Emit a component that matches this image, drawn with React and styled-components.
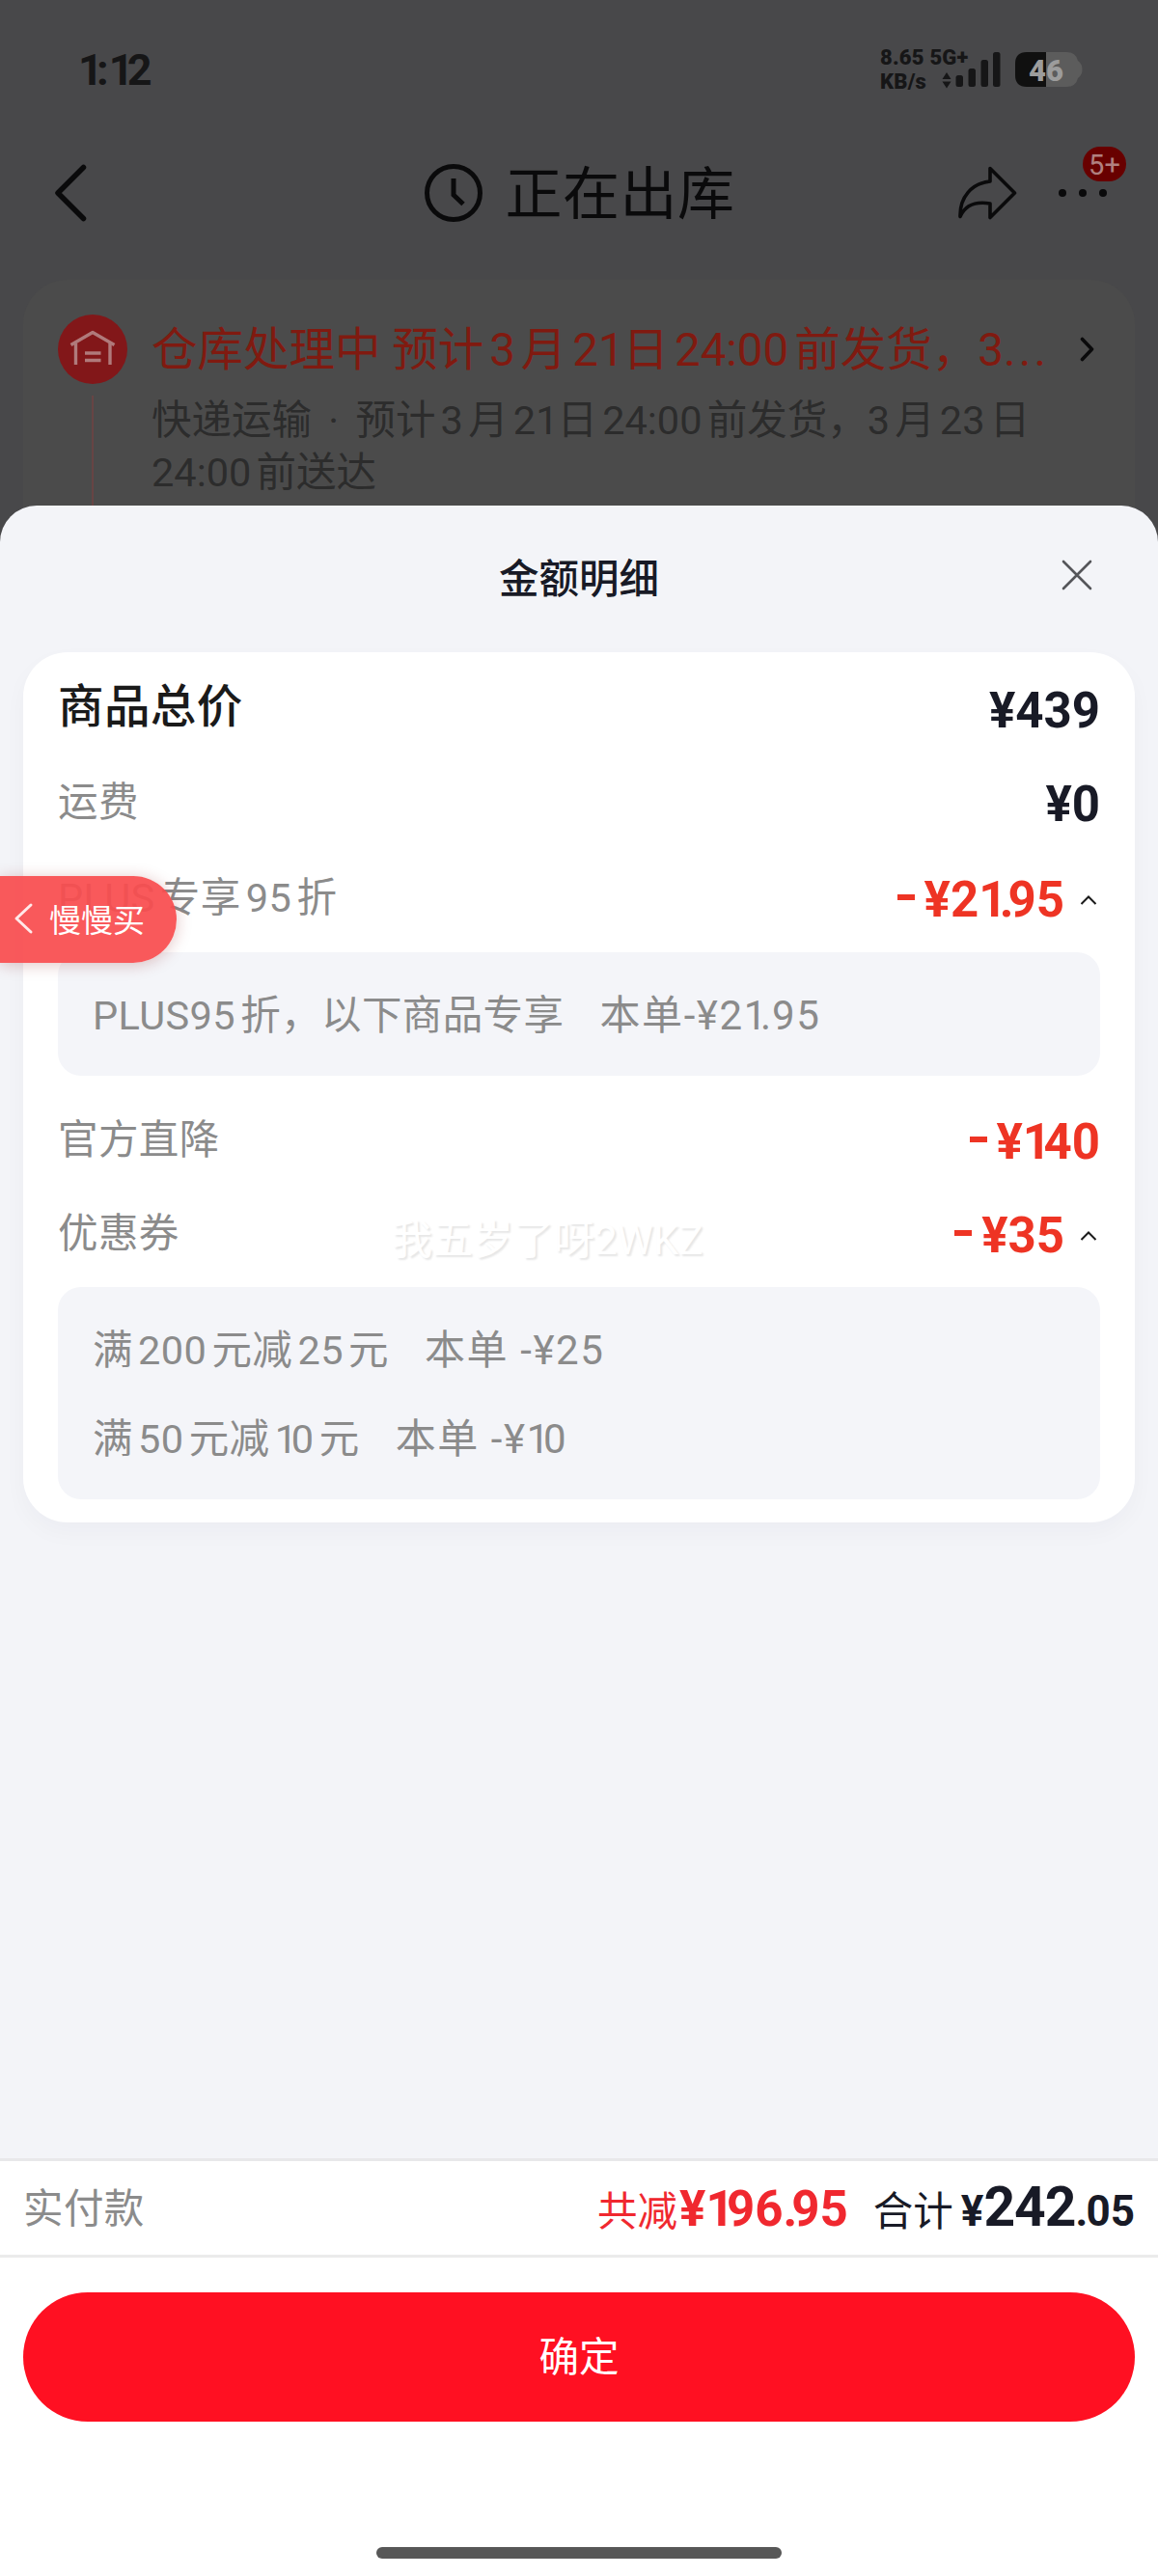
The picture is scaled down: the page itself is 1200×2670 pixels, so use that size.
import React from 'react'
import styled, { createGlobalStyle } from 'styled-components'

const GlobalStyle = createGlobalStyle`
    * { box-sizing: border-box; }
    body {
        margin: 0;
        background: #ffffff;
        font-family: Roboto, 'Noto Sans CJK SC', sans-serif;
        text-autospace: normal;
    }
`

const goods = [
    {
        label: 'PLUS专享95折', price: '¥21.95', height: 99,
        notes: [['PLUS95折，以下商品专享', '本单-¥21.95']],
    },
    { label: '官方直降', price: '¥140', height: 97 },
    {
        label: '优惠券', price: '¥35', height: 97,
        notes: [['满200元减25元', '本单 -¥25'], ['满50元减10元', '本单 -¥10']],
    },
]

const Amount = ({ children }) =>
    children.split(/(1|\.)/).map((part, i) => {
        if (part === '1') return <One key={i}>1</One>
        if (part === '.') return <Point key={i}>.</Point>
        return part
    })

const StatusIcons = () => (
    <svg width="146" height="44" viewBox="976 50 146 44" fill="#161617">
        <path d="M976.5 82 L981 75 L985.5 82 Z M976.5 84.500 L981 91.500 L985.5 84.500 Z" />
        <rect x="990.500" y="78" width="7.500" height="12" rx="2.500" />
        <rect x="1003.500" y="71" width="7.500" height="19" rx="2.500" />
        <rect x="1016.500" y="62" width="7.500" height="28" rx="2.500" />
        <rect x="1029" y="54" width="7.500" height="36" rx="2.500" />
        <path d="M1084 54 H1105 Q1115 54 1117 63 Q1121.500 66 1121.500 72 Q1121.500 78 1117 81 Q1115 90 1105 90 H1084 Z" fill="#5c5c5c" />
        <path d="M1084 54 H1064 Q1052 54 1052 66 V78 Q1052 90 1064 90 H1084 Z" fill="#101010" />
        <text x="1084" y="83.500" fill="#9c9c9c" fontSize="31" fontWeight="900" textAnchor="middle">46</text>
    </svg>
)

const BackIcon = () => (
    <svg width="36" height="64" viewBox="55 168 36 64" fill="none" stroke="#0a0a0b" strokeWidth="5.500" strokeLinecap="round" strokeLinejoin="round">
        <path d="M86.500 173.500 L60 200 L86.500 226.500" />
    </svg>
)

const ClockIcon = () => (
    <svg width="60" height="60" viewBox="0 0 60 60" fill="none" stroke="#0a0a0b" strokeWidth="5">
        <circle cx="30" cy="30" r="27.500" />
        <path d="M30 15 V32 L40 41.500" />
    </svg>
)

const ShareIcon = () => (
    <svg width="64" height="58" viewBox="991 171 64 58" fill="none" stroke="#0a0a0b" strokeWidth="3.600" strokeLinejoin="round">
        <path d="M1026 174.500 L1051.500 200 L1026 225.500 V211 C1011 208.500 1000 213 995 224.500 C994.500 204 1007 190 1026 188 Z" />
    </svg>
)

const WarehouseIcon = () => (
    <svg width="72" height="72" viewBox="60 326 72 72" fill="none">
        <circle cx="96" cy="362" r="36" fill="#821719" />
        <g stroke="#b07a7b" strokeWidth="3.400" strokeLinejoin="round">
            <path d="M73.500 357.500 L96 344.500 L118.500 357.500" />
            <path d="M78.500 356 V378 M114 356 V378 M88 366 H104.500 M88 373.500 H104.500" />
        </g>
    </svg>
)

const CaretUp = () => (
    <svg width="18" height="12" viewBox="0 0 18 12" fill="none" stroke="#1a1a1a" strokeWidth="2">
        <path d="M1.500 10 L9 2.500 L16.500 10" />
    </svg>
)

const App = () => {
  return (
    <Screen>
        <GlobalStyle />
        <DimmedPage>
            <StatusBar>
                <Clock><Amount>1:12</Amount></Clock>
                <Network>
                    <span>8.65 5G+</span>
                    <span>KB/s</span>
                </Network>
                <StatusIcons />
            </StatusBar>
            <NavBar>
                <BackIcon />
                <NavTitle><ClockIcon /><span>正在出库</span></NavTitle>
                <NavActions>
                    <ShareIcon />
                    <More><Dot /><Dot /><Dot /><Badge>5+</Badge></More>
                </NavActions>
            </NavBar>
            <OrderCard>
                <Timeline>
                    <WarehouseIcon />
                    <TimelineBar />
                </Timeline>
                <OrderInfo>
                    <OrderState>
                        <div><Amount>仓库处理中 预计3月21日24:00前发货，3...</Amount></div>
                        <svg width="16" height="26" viewBox="0 0 16 26" fill="none" stroke="#0a0a0b" strokeWidth="3.600" strokeLinecap="round" strokeLinejoin="round">
                            <path d="M2.500 2.500 L12.500 13 L2.500 23.500" />
                        </svg>
                    </OrderState>
                    <OrderDesc><Amount>快递运输 · 预计3月21日24:00前发货，3月23日</Amount><br />24:00前送达</OrderDesc>
                </OrderInfo>
            </OrderCard>
        </DimmedPage>

        <Sheet>
            <SheetHead>
                <SheetTitle>金额明细</SheetTitle>
                <CloseButton>
                    <svg width="32" height="32" viewBox="0 0 32 32" fill="none" stroke="#55565a" strokeWidth="2.600" strokeLinecap="round">
                        <path d="M2 2 L30 30 M30 2 L2 30" />
                    </svg>
                </CloseButton>
            </SheetHead>

            <DetailCard>
                <Row $height={99}>
                    <TotalLabel>商品总价</TotalLabel>
                    <Price $low>¥439</Price>
                </Row>
                <Row $height={99}>
                    <Label>运费</Label>
                    <Price>¥0</Price>
                </Row>
                {goods.map((item) => (
                    <React.Fragment key={item.label}>
                        <Row $height={item.height}>
                            <Label>{item.label}</Label>
                            <Price $red>
                                <Minus />
                                <span><Amount>{item.price}</Amount></span>
                                {item.notes && <CaretUp />}
                            </Price>
                        </Row>
                        {item.notes && (
                            <Panel>
                                {item.notes.map(([rule, cut]) => (
                                    <Note key={rule}>
                                        <span><Amount>{rule}</Amount></span>
                                        <Cut><Amount>{cut}</Amount></Cut>
                                    </Note>
                                ))}
                            </Panel>
                        )}
                    </React.Fragment>
                ))}
                <Watermark>我五岁了呀2WKZ</Watermark>
            </DetailCard>
        </Sheet>

        <Summary>
            <Label>实付款</Label>
            <Saved>共减<b><Amount>¥196.95</Amount></b></Saved>
            <Total>合计<TotalPrice>¥<strong>242</strong><Amount>.05</Amount></TotalPrice></Total>
        </Summary>
        <Footer>
            <ConfirmButton>确定</ConfirmButton>
            <HomeIndicator />
        </Footer>

        <BackPill>
            <svg width="22" height="34" viewBox="0 0 22 34" fill="none" stroke="#ffe9e9" strokeWidth="3" strokeLinecap="round" strokeLinejoin="round">
                <path d="M19 3 L4 17 L19 31" />
            </svg>
            <span>慢慢买</span>
        </BackPill>
    </Screen>
  )
}

export default App

const Screen = styled.div`
    width: 1200px;
    height: 2670px;
    display: flex;
    flex-direction: column;
    position: relative;
    overflow: hidden;
    background: #ffffff;
`

const One = styled.span`
    letter-spacing: -0.15em;
`

const Point = styled.span`
    letter-spacing: 0.02em;
`

const DimmedPage = styled.div`
    height: 574px;
    flex: none;
    background: #48484a;
    overflow: hidden;
`

const StatusBar = styled.div`
    height: 144px;
    display: flex;
    align-items: center;
    padding: 0 78px 0 81px;
`

const Clock = styled.div`
    flex: 1;
    font-size: 45px;
    font-weight: 700;
    line-height: 50px;
    padding-top: 2px;
    color: #161617;
`

const Network = styled.div`
    display: flex;
    flex-direction: column;
    width: 64px;
    font-size: 22px;
    font-weight: 900;
    line-height: 25px;
    letter-spacing: 0.2px;
    white-space: nowrap;
    color: #161617;
`

const NavBar = styled.div`
    height: 112px;
    display: grid;
    grid-template-columns: 1fr auto 1fr;
    align-items: center;
    padding: 0 53px 0 55px;
`

const NavTitle = styled.div`
    display: flex;
    align-items: center;
    gap: 23px;
    font-size: 59px;
    letter-spacing: 0.5px;
    line-height: 70px;
    color: #0a0a0b;
    span {
        padding-top: 4px;
    }
`

const NavActions = styled.div`
    display: flex;
    align-items: center;
    justify-content: flex-end;
    gap: 42px;
`

const More = styled.div`
    position: relative;
    display: flex;
    gap: 13px;
`

const Dot = styled.i`
    width: 8px;
    height: 8px;
    border-radius: 50%;
    background: #0a0a0b;
`

const Badge = styled.span`
    position: absolute;
    left: 25px;
    top: -44px;
    width: 45px;
    height: 36px;
    border-radius: 18px;
    background: #680000;
    color: #b08080;
    font-size: 29px;
    line-height: 38px;
    text-align: center;
`

const OrderCard = styled.div`
    margin: 34px 24px 0;
    height: 320px;
    border-radius: 46px;
    background: #4b4b4b;
    padding: 36px 41px 0 36px;
    display: flex;
    gap: 25px;
`

const Timeline = styled.div`
    display: flex;
    flex-direction: column;
    align-items: center;
    gap: 12px;
`

const TimelineBar = styled.div`
    width: 2px;
    flex: 1;
    background: #674444;
`

const OrderInfo = styled.div`
    flex: 1;
`

const OrderState = styled.div`
    height: 72px;
    display: flex;
    align-items: center;
    justify-content: space-between;
    font-size: 47.500px;
    line-height: 72px;
    white-space: nowrap;
    color: #801a10;
    div {
        padding-top: 2px;
    }
    ${Point} {
        letter-spacing: 0.07em;
    }
`

const OrderDesc = styled.div`
    margin-top: 11px;
    font-size: 41.500px;
    line-height: 54px;
    word-spacing: 7px;
    white-space: nowrap;
    color: #2c2c2c;
`

const Sheet = styled.div`
    flex: 1;
    margin-top: -50px;
    border-radius: 38px 38px 0 0;
    background: #f3f4f8;
    padding: 0 24px;
`

const SheetHead = styled.div`
    height: 152px;
    display: grid;
    grid-template-columns: 1fr auto 1fr;
    align-items: center;
    padding: 0 44px 3px;
`

const SheetTitle = styled.div`
    grid-column: 2;
    font-size: 41.500px;
    font-weight: 500;
    line-height: 60px;
    padding-top: 4px;
    color: #181a26;
`

const CloseButton = styled.div`
    justify-self: end;
    height: 38px;
`

const DetailCard = styled.div`
    position: relative;
    height: 902px;
    border-radius: 46px;
    background: #ffffff;
    padding: 6px 36px 0;
    box-shadow: 0 10px 24px rgba(40, 40, 70, 0.03);
`

const Row = styled.div`
    height: ${({ $height }) => $height}px;
    display: flex;
    align-items: center;
    justify-content: space-between;
`

const Label = styled.div`
    font-size: 41.500px;
    line-height: 56px;
    letter-spacing: 0.4px;
    padding-top: 3px;
    color: #8b8b8b;
`

const TotalLabel = styled(Label)`
    font-size: 47.500px;
    font-weight: 500;
    color: #1a1a1a;
`

const Price = styled.div`
    display: flex;
    align-items: center;
    font-size: 51px;
    font-weight: 700;
    line-height: 60px;
    padding-top: ${({ $low }) => ($low ? 10 : 6)}px;
    color: ${({ $red }) => ($red ? '#ee3424' : '#181a26')};
    svg {
        margin: 0 3px 0 16px;
    }
    ${Point} {
        letter-spacing: -0.12em;
    }
`

const Minus = styled.i`
    width: 18px;
    height: 6px;
    margin: 0 10px 6px 0;
    background: #ee3424;
`

const Panel = styled.div`
    margin: 8px 0 17px;
    border-radius: 24px;
    background: #f4f5f9;
    padding: 18px 36px;
`

const Note = styled.div`
    height: 92px;
    display: flex;
    align-items: center;
    gap: 37px;
    font-size: 41.500px;
    line-height: 56px;
    letter-spacing: 0.4px;
    padding-top: 3px;
    white-space: pre;
    color: #8b8b8b;
`

const Cut = styled.span`
    font-size: 42px;
    letter-spacing: 1.6px;
`

const Watermark = styled.div`
    position: absolute;
    left: 382px;
    top: 582px;
    font-size: 42px;
    line-height: 56px;
    color: #ffffff;
    text-autospace: no-autospace;
    text-shadow: 2px 2px 2px rgba(0, 0, 0, 0.1);
`

const Summary = styled.div`
    height: 103px;
    flex: none;
    display: flex;
    align-items: center;
    padding: 0 24px;
    border-top: 3px solid #e8e8ea;
    border-bottom: 3px solid #ebebeb;
    background: #ffffff;
`

const Saved = styled.div`
    margin-left: auto;
    font-size: 41.500px;
    line-height: 60px;
    padding-top: 5px;
    color: #f0282f;
    text-autospace: no-autospace;
    b {
        margin-left: 2px;
        font-size: 51px;
    }
    ${Point} {
        letter-spacing: -0.12em;
    }
`

const Total = styled.div`
    margin-left: 26px;
    font-size: 41.500px;
    line-height: 60px;
    padding-top: 4px;
    color: #181a26;
    text-autospace: no-autospace;
`

const TotalPrice = styled.b`
    margin-left: 8px;
    font-size: 44px;
    strong {
        font-size: 57px;
        font-weight: 700;
        letter-spacing: -1px;
    }
    ${Point} {
        letter-spacing: -0.04em;
    }
`

const Footer = styled.div`
    height: 330px;
    flex: none;
    display: flex;
    flex-direction: column;
    align-items: center;
    padding: 36px 24px 18px;
    background: #ffffff;
`

const ConfirmButton = styled.div`
    width: 100%;
    height: 134px;
    border-radius: 67px;
    background: #ff1022;
    color: #ffffff;
    font-size: 41.500px;
    line-height: 135px;
    text-align: center;
`

const HomeIndicator = styled.div`
    width: 420px;
    height: 12px;
    margin-top: auto;
    border-radius: 6px;
    background: #575757;
`

const BackPill = styled.div`
    position: absolute;
    left: 0;
    top: 908px;
    width: 183px;
    height: 90px;
    border-radius: 0 45px 45px 0;
    background: rgba(249, 76, 79, 0.93);
    box-shadow: 0 2px 16px rgba(140, 20, 20, 0.25);
    display: flex;
    align-items: center;
    gap: 16px;
    padding-left: 13px;
    font-size: 33px;
    color: #ffffff;
    span {
        padding-bottom: 3px;
    }
    svg {
        margin-bottom: 2px;
    }
`
